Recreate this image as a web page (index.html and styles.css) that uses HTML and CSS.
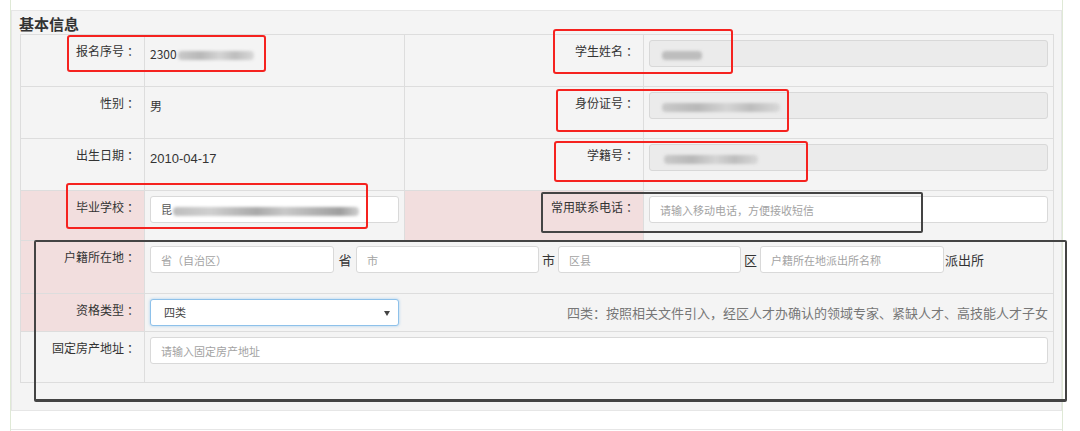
FILE: index.html
```html
<!DOCTYPE html>
<html lang="zh-CN">
<head>
<meta charset="utf-8">
<title>基本信息</title>
<link rel="stylesheet" href="styles.css">
</head>
<body>
<div class="outer">
  <div class="panel">
    <div class="title">基本信息</div>
    <table class="info">
      <colgroup>
        <col class="c1"><col class="c2"><col class="c3"><col class="c4">
      </colgroup>
      <tr class="r1">
        <td class="lbl">报名序号<i class="colon">：</i></td>
        <td class="val"><span class="txt">2300<span class="blur b-seq"></span></span></td>
        <td class="lbl">学生姓名<i class="colon">：</i></td>
        <td class="val"><div class="field disabled"><span class="blur b-name"></span></div></td>
      </tr>
      <tr class="r2">
        <td class="lbl">性别<i class="colon">：</i></td>
        <td class="val"><span class="txt">男</span></td>
        <td class="lbl">身份证号<i class="colon">：</i></td>
        <td class="val"><div class="field disabled"><span class="blur b-id"></span></div></td>
      </tr>
      <tr class="r3">
        <td class="lbl">出生日期<i class="colon">：</i></td>
        <td class="val"><span class="txt num">2010-04-17</span></td>
        <td class="lbl">学籍号<i class="colon">：</i></td>
        <td class="val"><div class="field disabled"><span class="blur b-reg"></span></div></td>
      </tr>
      <tr class="r4">
        <td class="lbl pink">毕业学校<i class="colon">：</i></td>
        <td class="val"><div class="field">昆<span class="blur b-school"></span></div></td>
        <td class="lbl pink">常用联系电话<i class="colon">：</i></td>
        <td class="val"><input class="field" type="text" placeholder="请输入移动电话，方便接收短信"></td>
      </tr>
      <tr class="r5">
        <td class="lbl pink">户籍所在地<i class="colon">：</i></td>
        <td class="val" colspan="3">
          <div class="addr">
            <input class="field" type="text" placeholder="省（自治区）">
            <span class="unit">省</span>
            <input class="field" type="text" placeholder="市">
            <span class="unit">市</span>
            <input class="field" type="text" placeholder="区县">
            <span class="unit">区</span>
            <input class="field" type="text" placeholder="户籍所在地派出所名称">
            <span class="unit left">派出所</span>
          </div>
        </td>
      </tr>
      <tr class="r6">
        <td class="lbl pink">资格类型<i class="colon">：</i></td>
        <td class="val" colspan="3">
          <div class="qual">
            <div class="select">四类<span class="arrow"></span></div>
            <span class="desc">四类：按照相关文件引入，经区人才办确认的领域专家、紧缺人才、高技能人才子女</span>
          </div>
        </td>
      </tr>
      <tr class="r7">
        <td class="lbl">固定房产地址<i class="colon">：</i></td>
        <td class="val" colspan="3"><input class="field" type="text" placeholder="请输入固定房产地址"></td>
      </tr>
    </table>
  </div>
  <div class="panel2"></div>
</div>

<div class="mark red m1"></div>
<div class="mark red m2"></div>
<div class="mark red m3"></div>
<div class="mark red m4"></div>
<div class="mark red m5"></div>
<div class="mark dark m6"></div>
<div class="mark dark m7"></div>
</body>
</html>
```

FILE: styles.css
```css
* { box-sizing: border-box; }

body {
  margin: 0;
  background: #fff;
  font-family: "Noto Sans CJK SC", "Noto Sans", sans-serif;
  color: #333;
}

.outer {
  margin-left: 10px;
  width: 1053px;
  border-left: 1px solid #dfe9d6;
  border-right: 1px solid #dfe9d6;
  padding-top: 10px;
}

.panel {
  background: #f4f4f4;
  border: 1px solid #e6e6e6;
  padding: 3px 8px 27px 8px;
}

.panel2 {
  margin-top: 18px;
  border-top: 1px solid #e6e6e6;
  height: 10px;
}

.title {
  font-size: 15px;
  line-height: 20px;
  height: 20px;
  font-weight: bold;
  color: #333;
  margin-left: -1px;
}

.info {
  width: 1033px;
  border-collapse: collapse;
  table-layout: fixed;
  background: #f4f4f4;
}

.c1 { width: 124px; }
.c2 { width: 260px; }
.c3 { width: 239px; }
.c4 { width: 410px; }

.info td {
  border: 1px solid #dddddd;
  vertical-align: top;
}

.r1 td { height: 52px; }
.r2 td { height: 52px; }
.r3 td { height: 52px; }
.r4 td { height: 50px; }
.r5 td { height: 53px; }
.r6 td { height: 38px; }
.r7 td { height: 51px; }

.lbl {
  text-align: right;
  font-size: 12px;
  line-height: 20px;
  padding: 6px 5px 0 0;
  color: #333;
  white-space: nowrap;
}

.colon {
  font-style: normal;
  margin-left: 3px;
}

.pink { background: #f2dede; }

.val {
  padding: 5px 5px 0 5px;
}

.txt {
  display: inline-block;
  font-size: 12px;
  line-height: 20px;
  padding-top: 1px;
  color: #333;
}

.num {
  font-family: "Liberation Sans", Arial, sans-serif;
  font-size: 13px;
}

.field {
  display: block;
  width: 100%;
  height: 27px;
  border: 1px solid #d9d9d9;
  border-radius: 3px;
  background: #fff;
  padding: 0 10px;
  font-family: "Noto Sans CJK SC", sans-serif;
  font-size: 11px;
  line-height: 25px;
  color: #555;
  outline: none;
}

.field::placeholder { color: #a3a3a3; }

.r4 .val:nth-child(2) .field { width: 249px; }

.disabled {
  background: #ebebeb;
  border-color: #d8d8d8;
}

.blur {
  display: inline-block;
  height: 9px;
  vertical-align: middle;
  filter: blur(1.6px);
  background: linear-gradient(90deg, #c9c9c9, #b8b8b8 30%, #d4d4d4 55%, #bdbdbd 75%, #d8d8d8);
  border-radius: 4px;
}

.b-seq { width: 76px; margin-left: 1px; }
.b-name { width: 40px; margin-left: 2px; background: #bdbdbd; }
.b-id { width: 118px; margin-left: 2px; }
.b-reg { width: 94px; margin-left: 4px; }
.b-school { width: 186px; margin-left: 1px; background: linear-gradient(90deg, #bdbdbd, #cfcfcf 20%, #a9a9a9 45%, #c8c8c8 60%, #9e9e9e 90%, #d0d0d0); }

.addr {
  display: grid;
  grid-template-columns: 184px 22px 183px 19px 183px 19px 184px auto;
  align-items: center;
}

.unit {
  font-size: 13px;
  line-height: 27px;
  text-align: center;
  color: #333;
}

.unit.left { text-align: left; padding-left: 1px; }

.qual {
  display: flex;
  align-items: flex-start;
}

.select {
  position: relative;
  width: 249px;
  height: 27px;
  border: 1px solid #8ec1ea;
  border-radius: 3px;
  box-shadow: 0 0 3px rgba(102, 175, 233, 0.55);
  background: #fff;
  padding: 0 13px;
  font-size: 11px;
  line-height: 25px;
  color: #444;
}

.arrow {
  position: absolute;
  right: 8px;
  top: 11px;
  border-left: 3px solid transparent;
  border-right: 3px solid transparent;
  border-top: 5px solid #444;
}

.desc {
  margin-left: auto;
  font-size: 13px;
  line-height: 20px;
  padding-top: 4px;
  color: #777;
}

.mark {
  position: absolute;
  border-radius: 3px;
}

.red { border: 2px solid #f5221f; }
.dark { border: 2px solid #444; border-radius: 2px; }

.m1 { left: 67px; top: 35px; width: 199px; height: 37px; }
.m2 { left: 553px; top: 29px; width: 180px; height: 45px; }
.m3 { left: 556px; top: 89px; width: 233px; height: 43px; }
.m4 { left: 554px; top: 141px; width: 254px; height: 41px; }
.m5 { left: 66px; top: 183px; width: 302px; height: 46px; }
.m6 { left: 541px; top: 192px; width: 382px; height: 41px; }
.m7 { left: 34px; top: 240px; width: 1033px; height: 162px; border-width: 2px 2px 3px 2px; }
```
